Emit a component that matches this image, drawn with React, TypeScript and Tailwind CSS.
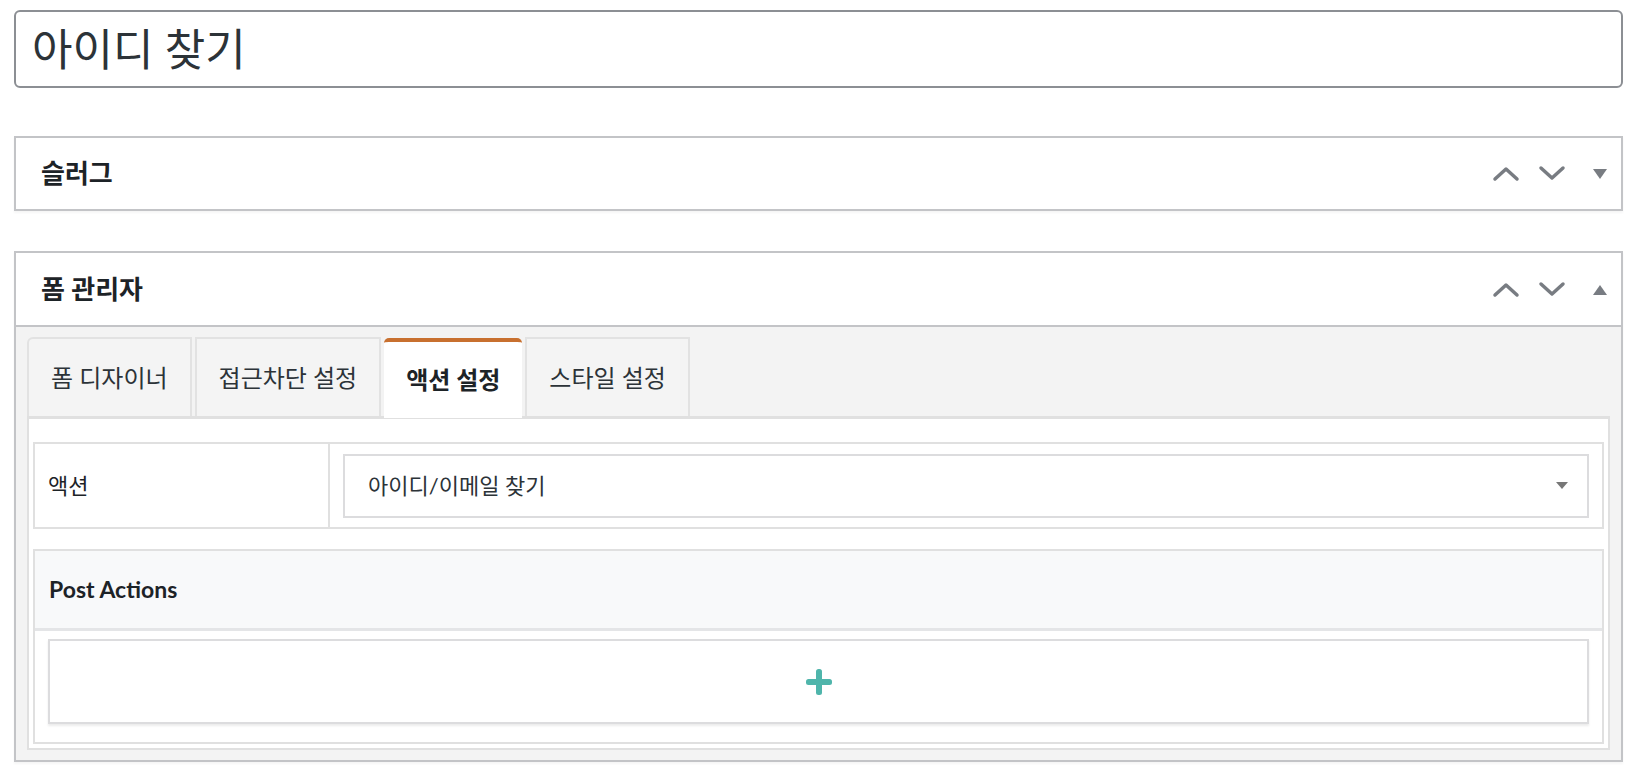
import { ReactNode } from "react";

const font = { fontFamily: 'Lato, "Noto Sans CJK KR", sans-serif' };

function ChevronUp() {
  return (
    <svg width="28" height="17" viewBox="0 0 28 17" fill="none">
      <polyline points="3,14 14,4 25,14" stroke="#787c82" strokeWidth="3.5" strokeLinejoin="round" strokeLinecap="round" />
    </svg>
  );
}

function ChevronDown() {
  return (
    <svg width="28" height="17" viewBox="0 0 28 17" fill="none">
      <polyline points="3,3 14,13 25,3" stroke="#787c82" strokeWidth="3.5" strokeLinejoin="round" strokeLinecap="round" />
    </svg>
  );
}

function Caret({ up }: { up?: boolean }) {
  return (
    <svg width="16" height="11" viewBox="0 0 16 11">
      {up ? <polygon points="1,11 8,1 15,11" fill="#787c82" /> : <polygon points="1,1 15,1 8,11" fill="#787c82" />}
    </svg>
  );
}

function PostBox({ title, open, children }: { title: string; open?: boolean; children?: ReactNode }) {
  return (
    <div className="border-2 border-[#c3c4c7] bg-white shadow-[0_2px_2px_rgba(0,0,0,0.04)]">
      <div className={`flex items-center pl-[25px] pr-[13px] ${open ? "h-[74px] border-b-2 border-[#c3c4c7]" : "h-[71px]"}`}>
        <h2 className="flex-1 text-[26px] font-bold text-[#1d2327]">{title}</h2>
        <div className="flex items-center gap-[18px]">
          <ChevronUp />
          <ChevronDown />
          <div className="ml-[8px]">
            <Caret up={open} />
          </div>
        </div>
      </div>
      {children}
    </div>
  );
}

export default function App() {
  const tabs = ["폼 디자이너", "접근차단 설정", "액션 설정", "스타일 설정"];
  const active = 2;

  return (
    <div className="min-h-screen bg-white pl-[14px] pr-[11px] pt-[10px] text-[#1d2327]" style={font}>
      {/* Title */}
      <div className="h-[78px] border-2 border-[#8c8f94] rounded-[6px] flex items-center px-[16px]">
        <span className="text-[44px] text-[#2c3338] leading-none">아이디 찾기</span>
      </div>

      <div className="mt-[48px]">
        <PostBox title="슬러그" />
      </div>

      <div className="mt-[40px]">
        <PostBox title="폼 관리자" open>
          <div className="bg-[#f3f3f3] px-[11px] pt-[10px] pb-[10px]">
            {/* Tabs */}
            <div className="flex gap-[3px] h-[79px] items-end">
              {tabs.map((t, i) =>
                i === active ? (
                  <div
                    key={t}
                    className="h-[80px] px-[22px] flex items-center bg-white border-t-[4px] border-[#c8702f] rounded-t-[5px] text-[24px] font-bold text-[#1d2327] relative z-10 -mb-[2px]"
                  >
                    {t}
                  </div>
                ) : (
                  <div
                    key={t}
                    className="h-[79px] px-[22px] flex items-center bg-[#f4f4f4] border-2 border-b-0 border-[#e2e2e2] first:rounded-tl-[6px] text-[24px] text-[#2c3338]"
                  >
                    {t}
                  </div>
                )
              )}
            </div>

            {/* Panel */}
            <div className="bg-white border-2 border-[#e0e0e0] border-t-[3px] px-[4px] pt-[23px] pb-[4px] flex flex-col gap-[20px]">
              {/* Action row */}
              <div className="border-2 border-[#e0e0e0] flex h-[87px]">
                <div className="w-[295px] border-r-2 border-[#e0e0e0] flex items-center pl-[13px] text-[22px]">액션</div>
                <div className="flex-1 flex items-center px-[13px]">
                  <div className="flex-1 h-[64px] border-2 border-[#dcdcde] flex items-center pl-[23px] pr-[19px]">
                    <span className="flex-1 text-[22px] text-[#2c3338]">아이디/이메일 찾기</span>
                    <svg width="12" height="7" viewBox="0 0 12 7">
                      <polygon points="0,0 12,0 6,7" fill="#777" />
                    </svg>
                  </div>
                </div>
              </div>

              {/* Post Actions */}
              <div className="border-2 border-[#e0e0e0]">
                <div className="h-[80px] bg-[#f8f9fa] border-b-[3px] border-[#e4e5e7] flex items-center pl-[14px] text-[23px] font-bold text-[#1d2327]">
                  Post Actions
                </div>
                <div className="px-[13px] pt-[8px] pb-[18px]">
                  <div className="h-[85px] border-2 border-[#dcdcde] shadow-[0_2px_2px_rgba(0,0,0,0.08)] flex items-center justify-center">
                    <svg width="28" height="28" viewBox="0 0 28 28">
                      <rect x="11" y="1" width="6" height="26" rx="2.5" fill="#4fb5ab" />
                      <rect x="1" y="11" width="26" height="6" rx="2.5" fill="#4fb5ab" />
                    </svg>
                  </div>
                </div>
              </div>
            </div>
          </div>
        </PostBox>
      </div>
    </div>
  );
}
